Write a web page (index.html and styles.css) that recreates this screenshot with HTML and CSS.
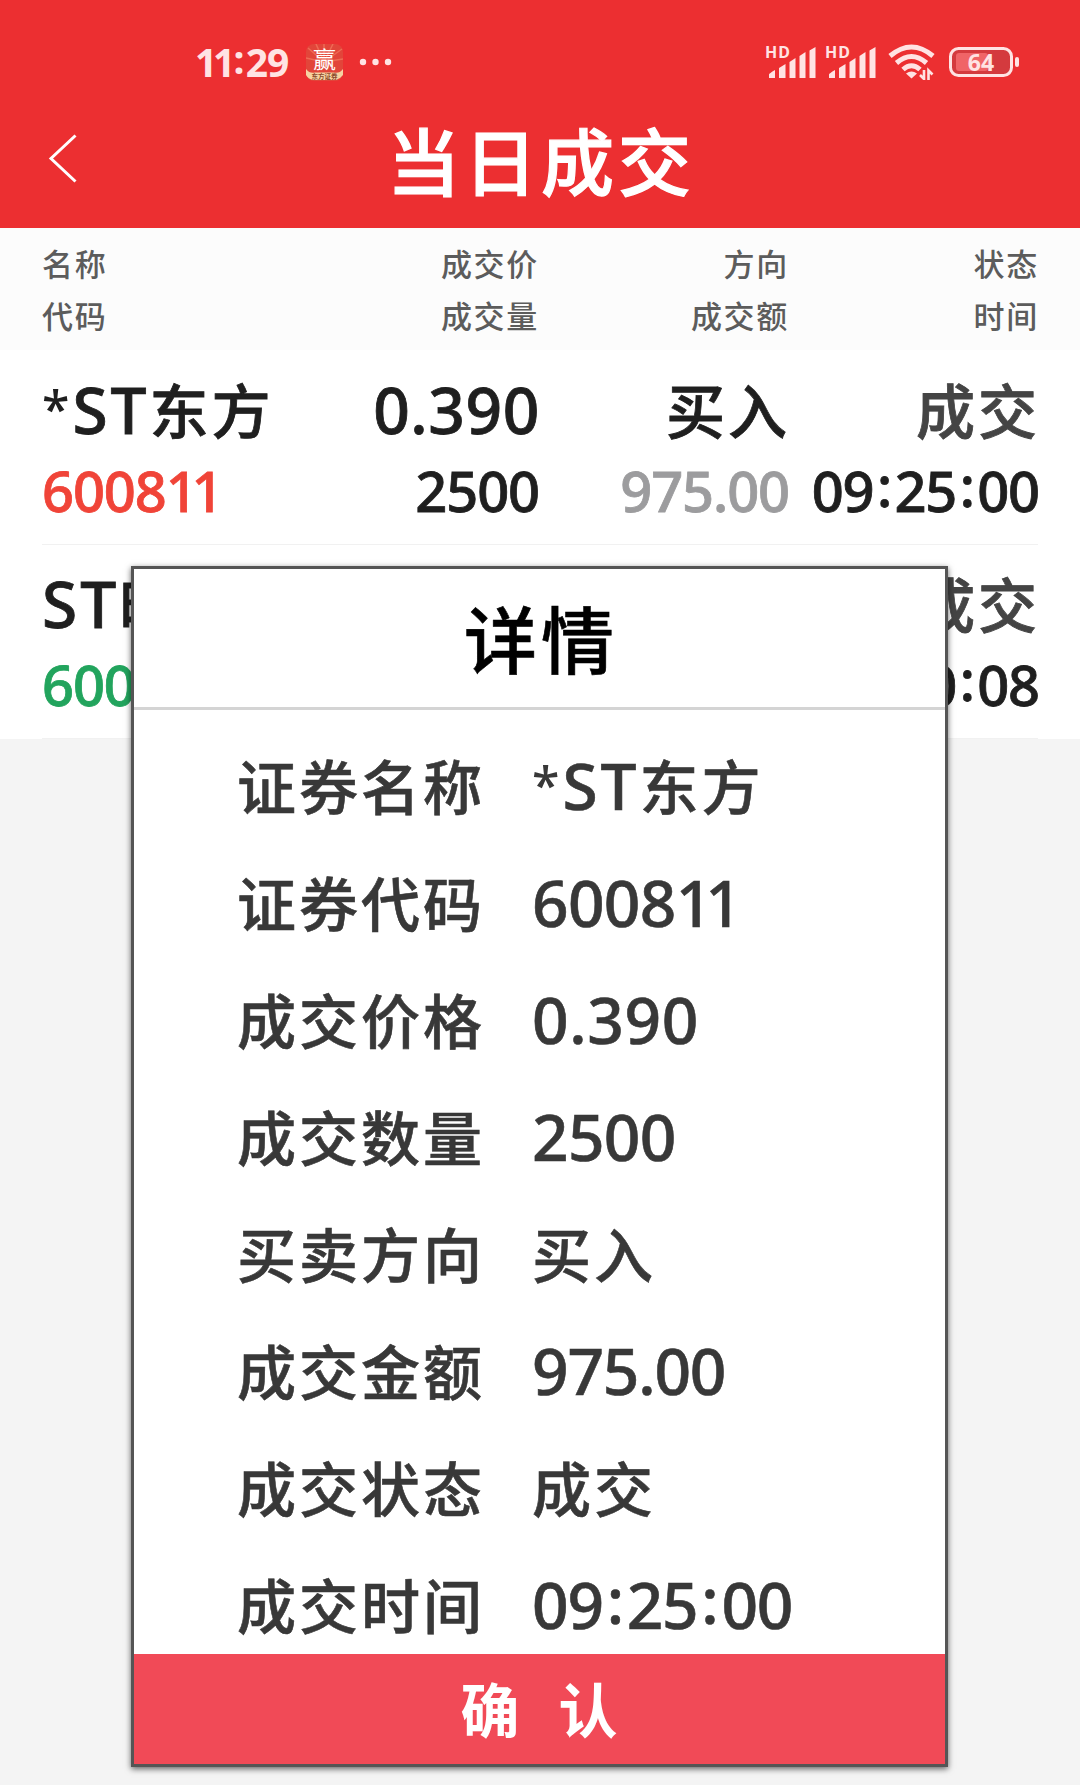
FILE: index.html
```html
<!DOCTYPE html>
<html lang="zh-CN">
  <head>
    <meta charset="UTF-8" />
    <meta name="viewport" content="width=device-width, initial-scale=1.0" />
    <title>当日成交</title>
    <link rel="stylesheet" href="styles.css">
  </head>
  <body>
    <header class="header">
      <div class="status-bar">
        <div class="status-left">
          <span class="clock"><span class="ones">11</span><span class="colon">:</span>29</span>
          <svg class="app-icon" width="37" height="37" viewBox="0 0 37 37">
            <rect width="37" height="37" rx="8" fill="#e2453a" />
            <path d="M18 18L2 4M18 18L10 0M18 18V0M18 18L27 0M18 18L36 5M18 18L0 14M18 18L37 15" stroke="#ee6a54" stroke-width="1.5" />
            <text class="app-char" x="18.500" y="24" text-anchor="middle">赢</text>
            <path d="M0 25Q4 30 9 28.500H28Q33 30 37 25V31Q34 35 30 36H7Q2 35 0 31Z" fill="#f6d3a2" />
            <text class="app-label" x="18.500" y="34.500" text-anchor="middle">东方证券</text>
          </svg>
          <svg width="34" height="8" viewBox="0 0 34 8">
            <g fill="#ffe3e3">
              <circle cx="4" cy="4" r="3.200" />
              <circle cx="16.500" cy="4" r="3.200" />
              <circle cx="29" cy="4" r="3.200" />
            </g>
          </svg>
        </div>
        <div class="status-right">
          <svg class="signal" width="52" height="36" viewBox="0 0 52 36">
            <text class="hd" x="-1" y="14" textLength="25">HD</text>
            <path d="M3 34V30.500Q3 29.500 9 26V34ZM13 34V24L19.500 20V34ZM23.500 34V18L29.500 14V34ZM33.500 34V12L39.500 8V34ZM43.500 34V6.500L49.500 3V34Z" />
          </svg>
          <svg class="signal" width="52" height="36" viewBox="0 0 52 36">
            <text class="hd" x="-1" y="14" textLength="25">HD</text>
            <path d="M3 34V30.500Q3 29.500 9 26V34ZM13 34V24L19.500 20V34ZM23.500 34V18L29.500 14V34ZM33.500 34V12L39.500 8V34ZM43.500 34V6.500L49.500 3V34Z" />
          </svg>
          <svg class="wifi" width="48" height="36" viewBox="0 0 48 36">
            <g fill="none" stroke="#ffe3e3" stroke-width="5">
              <path d="M2 12Q23.500 -6 45 12" />
              <path d="M8.500 19Q23.500 6 38.500 19" />
              <path d="M15 25.500Q23.500 18 32 25.500" />
            </g>
            <path d="M18 29.500Q23.500 25.500 29 29.500L23.500 34.500Z" fill="#ffe3e3" />
            <path d="M36 26V35L32 31M40.500 36V26.500L44.500 30.500" fill="none" stroke="#ffe3e3" stroke-width="2.600" />
          </svg>
          <svg class="battery" width="70" height="32" viewBox="0 0 70 32">
            <rect x="1.500" y="2.500" width="61" height="27" rx="8" fill="#d43a3e" stroke="#ffe3e3" stroke-width="3" />
            <rect x="7" y="7" width="32" height="18" rx="3" fill="#f06467" />
            <rect x="66" y="11" width="4" height="10" rx="2" fill="#ffe3e3" />
            <text class="battery-text" x="32" y="24.500" text-anchor="middle">64</text>
          </svg>
        </div>
      </div>
      <div class="title-bar">
        <svg class="back" width="30" height="50" viewBox="0 0 30 50">
          <path d="M27.500 1.500L3 24.500L27.500 47.500" fill="none" stroke="#fff" stroke-width="3" />
        </svg>
        <h1>当日成交</h1>
      </div>
    </header>

    <div class="table-head">
      <div><p>名称</p><p>代码</p></div>
      <div><p>成交价</p><p>成交量</p></div>
      <div><p>方向</p><p>成交额</p></div>
      <div><p>状态</p><p>时间</p></div>
    </div>

    <main class="list">
      <div class="row">
        <div>
          <p class="top"><span class="star">*</span><span class="num st">ST</span>东方</p>
          <p class="bottom red">6008<span class="ones">11</span></p>
        </div>
        <div>
          <p class="top"><span class="num price">0.390</span></p>
          <p class="bottom">2500</p>
        </div>
        <div>
          <p class="top">买入</p>
          <p class="bottom grey">975.00</p>
        </div>
        <div>
          <p class="top dark">成交</p>
          <p class="bottom">09<span class="colon">:</span>25<span class="colon">:</span>00</p>
        </div>
      </div>
      <div class="row">
        <div>
          <p class="top"><span class="num st">ST</span>时</p>
          <p class="bottom green">600</p>
        </div>
        <div></div>
        <div></div>
        <div>
          <p class="top dark">成交</p>
          <p class="bottom">0<span class="colon">:</span>08</p>
        </div>
      </div>
    </main>

    <div class="modal">
      <h2>详情</h2>
      <dl class="details">
        <dt>证券名称</dt><dd><span class="star">*</span><span class="num st">ST</span>东方</dd>
        <dt>证券代码</dt><dd><span class="num">6008<span class="ones">11</span></span></dd>
        <dt>成交价格</dt><dd><span class="num price">0.390</span></dd>
        <dt>成交数量</dt><dd><span class="num">2500</span></dd>
        <dt>买卖方向</dt><dd>买入</dd>
        <dt>成交金额</dt><dd><span class="num amount">975.00</span></dd>
        <dt>成交状态</dt><dd>成交</dd>
        <dt>成交时间</dt><dd><span class="num amount">09<span class="colon">:</span>25<span class="colon">:</span>00</span></dd>
      </dl>
      <button class="confirm-btn">确认</button>
    </div>
  </body>
</html>
```
FILE: styles.css
```css
* {
  box-sizing: border-box;
}
body {
  margin: 0;
  height: 1785px;
  overflow: hidden;
  position: relative;
  background-color: #f4f4f4;
  font-family: "Noto Sans", "Noto Sans CJK SC", sans-serif;
  font-weight: 500;
  color: #1f1f1f;
}
p,
h1,
h2,
dl,
dd {
  margin: 0;
}

/* header */
.header {
  height: 228px;
  background-color: #ec2f31;
  color: #fff;
}
.status-bar {
  height: 100px;
  padding: 24px 61px 0 195px;
  display: flex;
  justify-content: space-between;
  align-items: center;
}
.status-left,
.status-right {
  display: flex;
  align-items: center;
}
.clock {
  width: 111px;
  font-size: 39px;
  font-weight: 700;
  letter-spacing: -1px;
  line-height: 50px;
  color: #ffe3e3;
}
.app-icon {
  margin-right: 16px;
}
.app-char {
  font-size: 23px;
  font-weight: 400;
  fill: #fff;
}
.app-label {
  font-size: 6.5px;
  font-weight: 700;
  fill: #8c4a2c;
}
.signal {
  margin-right: 8px;
  fill: #ffe3e3;
  overflow: visible;
}
.hd {
  font-size: 16px;
  font-weight: 700;
}
.wifi {
  margin: 0 13px 0 2px;
}
.battery-text {
  font-size: 23px;
  font-weight: 700;
  fill: #ffe3e3;
}
.title-bar {
  height: 128px;
  padding: 0 48px;
  display: grid;
  grid-template-columns: 30px 1fr 30px;
}
.back {
  margin-top: 34px;
}
.title-bar h1 {
  font-size: 73px;
  font-weight: 500;
  letter-spacing: 4px;
  line-height: 124px;
  text-align: center;
  text-indent: 2px;
  -webkit-text-stroke: 1.2px;
}

/* table */
.table-head,
.row {
  display: grid;
  grid-template-columns: 300px 197px 250px 250px;
}
.table-head > div + div,
.row > div + div {
  text-align: right;
}
.table-head {
  height: 122px;
  padding: 10px 40px 0 42px;
  background-color: #fcfcfc;
  color: #5c5c5c;
  font-size: 31px;
  letter-spacing: 1.7px;
  line-height: 52px;
}
.list {
  height: 389px;
  background-color: #fff;
}
.row {
  height: 195px;
  margin: 0 42px;
  padding-top: 22px;
  border-bottom: 1px solid #f1f1f1;
  -webkit-text-stroke: 0.8px;
}
.row + .row {
  height: 194px;
  padding-top: 21px;
}
.top {
  height: 78px;
  margin-right: -1px;
  font-size: 59px;
  letter-spacing: 3px;
  line-height: 78px;
  white-space: nowrap;
}
.num {
  font-size: 64px;
  letter-spacing: -0.7px;
  line-height: 1;
}
.st {
  letter-spacing: 3px;
}
.price {
  letter-spacing: 0.6px;
}
.amount {
  letter-spacing: -1.2px;
}
.star {
  display: inline-block;
  font-size: 50px;
  line-height: 1;
  transform: translateY(-7px);
  -webkit-text-stroke: 0;
}
.bottom {
  font-size: 56px;
  letter-spacing: -1.1px;
  line-height: 80px;
  white-space: nowrap;
}
/* narrower pitch for consecutive ones */
.ones {
  letter-spacing: -0.11em;
}
.colon {
  display: inline-block;
  margin: 0 0.06em;
  line-height: 1;
  transform: translateY(-0.085em);
}
.red {
  color: #f04438;
}
.green {
  color: #22a45d;
}
.grey {
  color: #9c9c9e;
}
.dark {
  color: #444;
}

/* detail dialog */
.modal {
  position: absolute;
  left: 131px;
  top: 566px;
  width: 817px;
  height: 1201px;
  border: 3px solid #555;
  background-color: #fff;
  box-shadow: 0 2px 6px rgba(0, 0, 0, 0.6);
  display: flex;
  flex-direction: column;
}
.modal h2 {
  height: 141px;
  border-bottom: 3px solid #d4d4d4;
  color: #000;
  font-size: 73px;
  font-weight: 500;
  letter-spacing: 4px;
  line-height: 142px;
  text-align: center;
  text-indent: 3px;
  -webkit-text-stroke: 0.6px;
}
.details {
  flex: 1;
  min-height: 0;
  padding: 19px 0 0 103px;
  display: grid;
  grid-template-columns: 295px 1fr;
  grid-auto-rows: 117px;
  align-content: start;
  color: #383838;
  font-size: 59px;
  letter-spacing: 3px;
  line-height: 117px;
  -webkit-text-stroke: 0.6px;
}
.confirm-btn {
  flex-shrink: 0;
  position: relative;
  height: 110px;
  border: none;
  padding: 0 0 4px 38px;
  background-color: #f14a57;
  color: #fff;
  font-family: inherit;
  font-size: 59px;
  font-weight: 700;
  letter-spacing: 39px;
}
```
